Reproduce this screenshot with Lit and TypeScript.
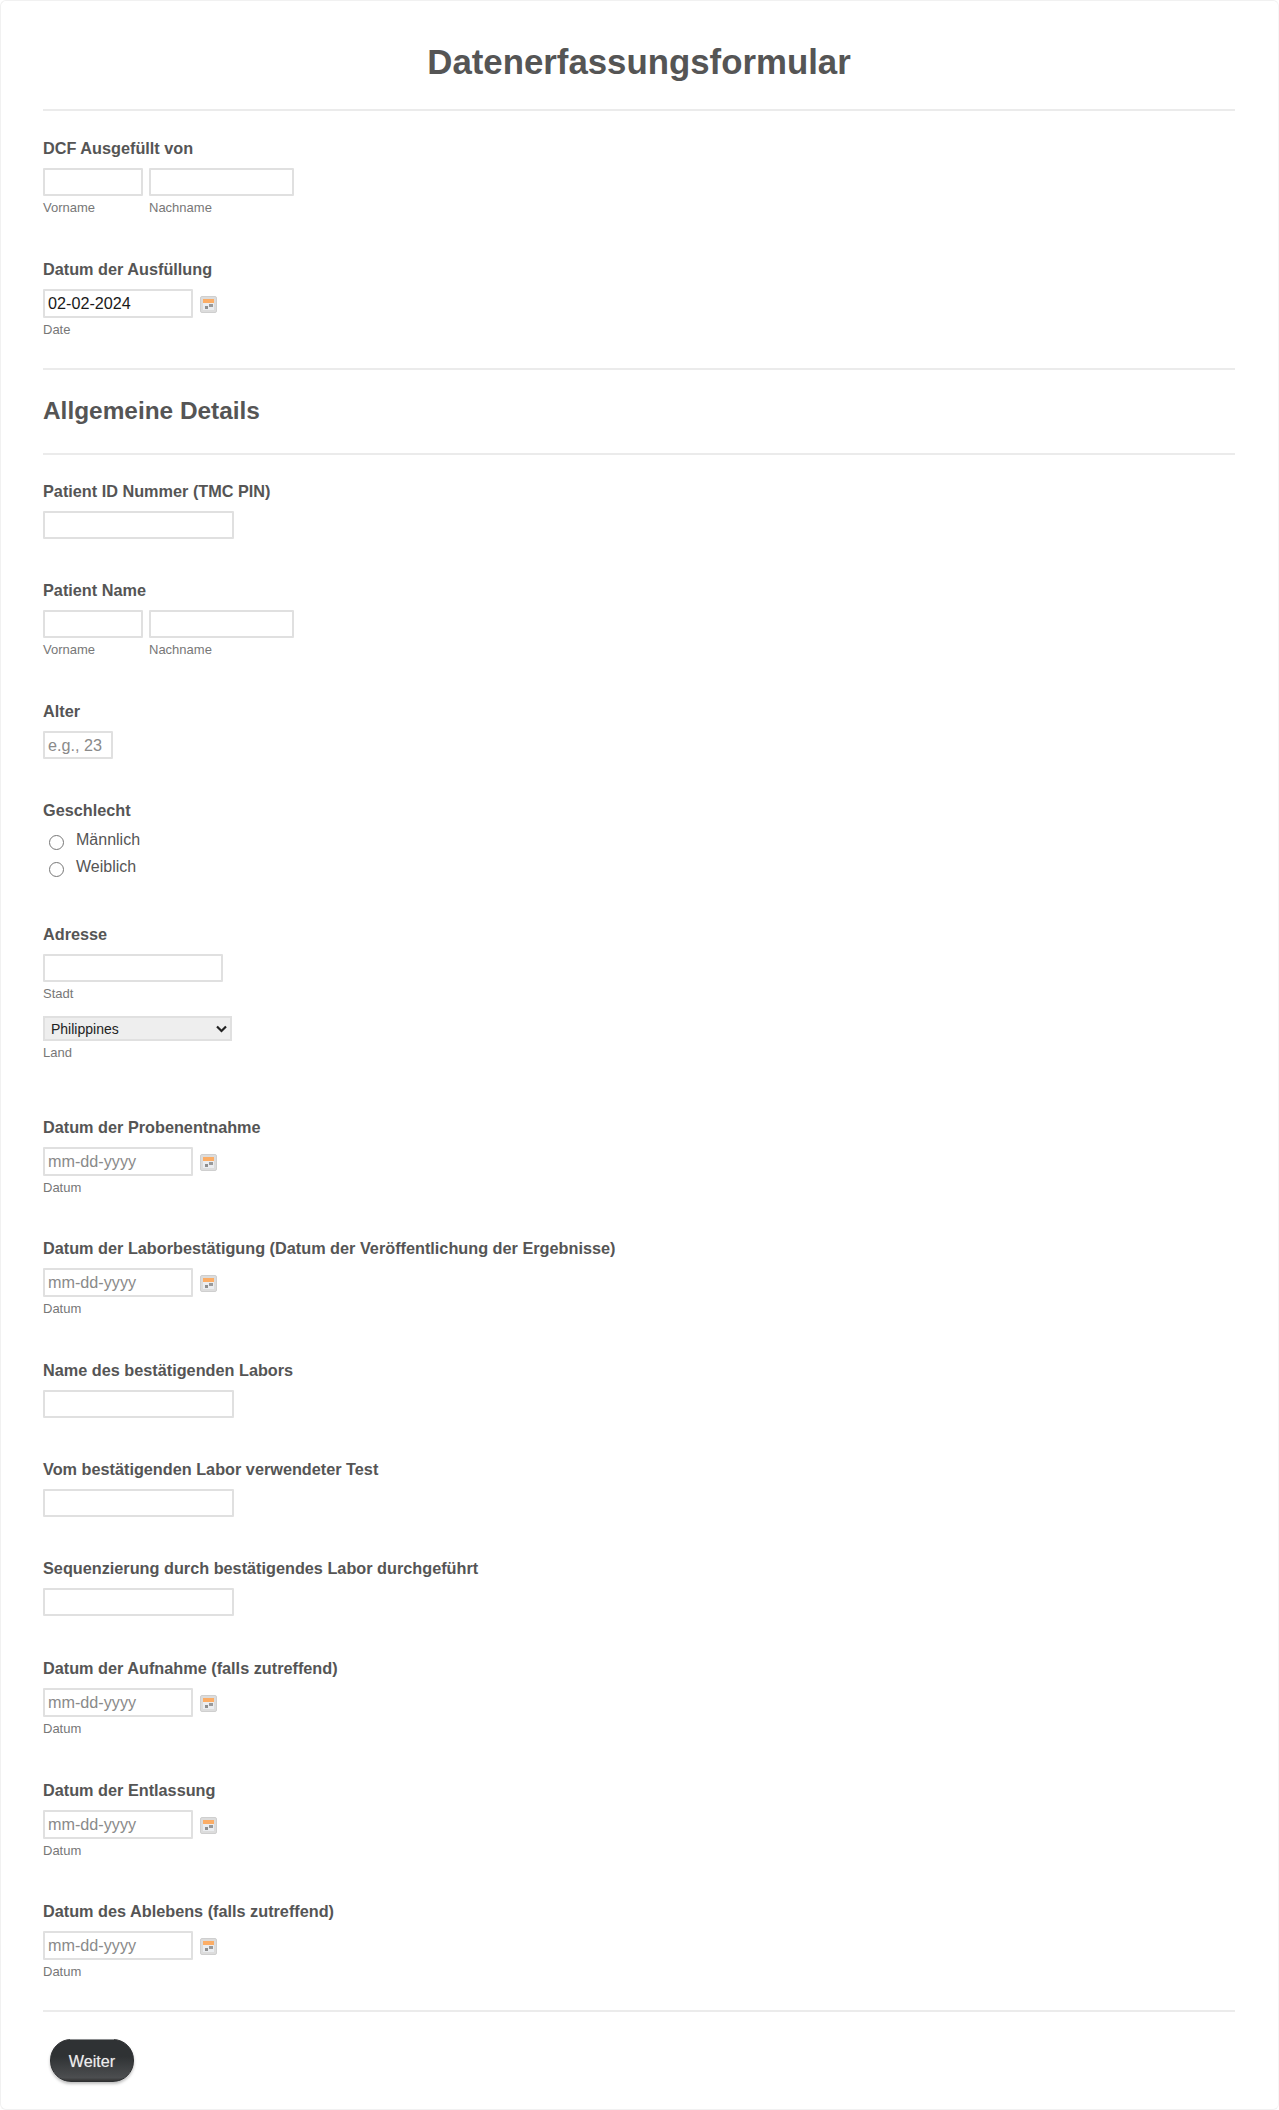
import { LitElement, html, css } from 'lit';
import { customElement } from 'lit/decorators.js';

@customElement('app-root')
export class AppRoot extends LitElement {
  static styles = css`
    :host {
      display: block;
      font-family: 'Liberation Sans', Arial, sans-serif;
      color: #555;
      background: #fff;
    }
    .form {
      box-sizing: border-box;
      height: 2110px;
      padding: 0 43px 0 42px;
      border: 1px solid #f1f1f1;
      border-radius: 6px;
      border-right-color: #f6f6f6;
    }
    .title {
      margin: 0;
      height: 108px;
      box-sizing: border-box;
      padding-top: 40px;
      font-size: 34.8px;
      line-height: 42px;
      text-align: center;
      color: #555;
    }
    .rule {
      height: 2px;
      background: #ebebeb;
    }
    .section {
      margin: 0;
      font-size: 24.4px;
      line-height: 30px;
      padding: 26px 0 27px;
      color: #555;
    }
    .label {
      font-size: 16.25px;
      font-weight: bold;
      line-height: 19px;
      color: #555;
      padding-top: 1px;
      margin-bottom: 10px;
    }
    input[type='text'] {
      box-sizing: border-box;
      display: block;
      height: 28px;
      padding: 0 3px;
      margin: 0;
      border: 2px solid #e0e0e0;
      border-radius: 1px;
      background: #fff;
      font-family: inherit;
      font-size: 16.2px;
      color: #1a1a1a;
      outline: none;
    }
    input::placeholder {
      color: #8a8a8a;
    }
    .row {
      display: flex;
      gap: 6px;
    }
    .sub {
      font-size: 13px;
      line-height: 15px;
      margin-top: 4px;
      color: #777;
    }
    .date-row {
      display: flex;
      align-items: center;
      gap: 7px;
    }
    input.date[type='text'] {
      width: 150px;
      height: 29px;
    }
    .wide {
      width: 191px;
    }
    .cal {
      display: block;
      margin-top: 1px;
    }
    .radios {
      margin-top: -4px;
    }
    .radio {
      display: flex;
      align-items: center;
      height: 27px;
      padding-left: 6px;
      font-size: 16px;
      color: #555;
    }
    .radio input {
      width: 15px;
      height: 15px;
      margin: 5px 12px 0 0;
    }
    .select-wrap {
      position: relative;
      width: 189px;
      margin-top: 15px;
    }
    select {
      display: block;
      box-sizing: border-box;
      width: 100%;
      height: 25px;
      margin: 0;
      padding: 0 0 0 6px;
      border: 2px solid #e0e0e0;
      border-radius: 0;
      background: #eee;
      appearance: none;
      font-family: inherit;
      font-size: 14px;
      color: #222;
    }
    .chevron {
      position: absolute;
      right: 5px;
      top: 9px;
      pointer-events: none;
    }
    .foot {
      padding: 27px 0 0 7px;
    }
    button {
      position: relative;
      display: block;
      box-sizing: border-box;
      width: 84px;
      height: 43px;
      padding: 2px 0 0;
      border: 1px solid #2e3032;
      border-radius: 21px;
      background: linear-gradient(#2f3234 40%, #4c4e50 92%, #333 100%);
      box-shadow: 0 2px 3px rgba(0, 0, 0, 0.25);
      color: #eee;
      font-family: inherit;
      font-size: 16.2px;
      text-shadow: 0 0 1px rgba(255, 255, 255, 0.4);
    }
    button::before {
      content: '';
      position: absolute;
      top: -1px;
      left: 19px;
      right: 19px;
      height: 1px;
      background: #8c8e90;
    }
  `;

  private cal() {
    return html`<svg class="cal" width="17" height="17" viewBox="0 0 17 17">
      <rect x="0.5" y="0.5" width="16" height="16" rx="1.5" fill="#dcdcdc" stroke="#cfcfcf" />
      <rect x="3" y="3" width="11" height="11" fill="#ebedf0" />
      <rect x="3" y="3" width="11" height="4" fill="#fbad66" />
      <rect x="5" y="10" width="3" height="3" fill="#8f8f8f" />
      <rect x="9" y="8" width="4" height="3" fill="#9a9a9a" />
    </svg>`;
  }

  private name() {
    return html`<div class="row">
      <div><input type="text" style="width:100px" /><div class="sub">Vorname</div></div>
      <div><input type="text" style="width:145px" /><div class="sub">Nachname</div></div>
    </div>`;
  }

  private date(label: string, top: number, sub = 'Datum', value = '', placeholder = 'mm-dd-yyyy') {
    return html`<div style="margin-top:${top}px">
      <div class="label">${label}</div>
      <div class="date-row">
        <input class="date" type="text" .value=${value} placeholder=${placeholder} />
        ${this.cal()}
      </div>
      <div class="sub">${sub}</div>
    </div>`;
  }

  private text(label: string, top: number) {
    return html`<div style="margin-top:${top}px">
      <div class="label">${label}</div>
      <input class="wide" type="text" />
    </div>`;
  }

  render() {
    return html`<div class="form">
      <h1 class="title">Datenerfassungsformular</h1>
      <div class="rule"></div>
      <div style="margin-top:27px">
        <div class="label">DCF Ausgefüllt von</div>
        ${this.name()}
      </div>
      ${this.date('Datum der Ausfüllung', 44, 'Date', '02-02-2024', '')}
      <div class="rule" style="margin-top:31px"></div>
      <h2 class="section">Allgemeine Details</h2>
      <div class="rule"></div>
      ${this.text('Patient ID Nummer (TMC PIN)', 26)}
      <div style="margin-top:41px">
        <div class="label">Patient Name</div>
        ${this.name()}
      </div>
      <div style="margin-top:44px">
        <div class="label">Alter</div>
        <input type="text" style="width:70px" placeholder="e.g., 23" />
      </div>
      <div style="margin-top:41px">
        <div class="label">Geschlecht</div>
        <div class="radios">
          <label class="radio"><input type="radio" name="g" />Männlich</label>
          <label class="radio"><input type="radio" name="g" />Weiblich</label>
        </div>
      </div>
      <div style="margin-top:44px">
        <div class="label">Adresse</div>
        <input type="text" style="width:180px" />
        <div class="sub">Stadt</div>
        <div class="select-wrap">
          <select><option>Philippines</option></select>
          <svg class="chevron" width="11" height="8" viewBox="0 0 11 8">
            <path d="M1 1.5 L5.5 6 L10 1.5" fill="none" stroke="#222" stroke-width="2.2" />
          </svg>
        </div>
        <div class="sub">Land</div>
      </div>
      ${this.date('Datum der Probenentnahme', 57)}
      ${this.date('Datum der Laborbestätigung (Datum der Veröffentlichung der Ergebnisse)', 43)}
      ${this.text('Name des bestätigenden Labors', 44)}
      ${this.text('Vom bestätigenden Labor verwendeter Test', 41)}
      ${this.text('Sequenzierung durch bestätigendes Labor durchgeführt', 41)}
      ${this.date('Datum der Aufnahme (falls zutreffend)', 42)}
      ${this.date('Datum der Entlassung', 44)}
      ${this.date('Datum des Ablebens (falls zutreffend)', 43)}
      <div class="rule" style="margin-top:31px"></div>
      <div class="foot"><button>Weiter</button></div>
    </div>`;
  }
}
